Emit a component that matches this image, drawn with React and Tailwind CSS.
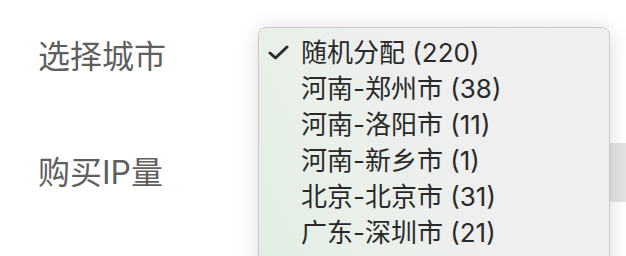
import React from "react";

const cities = [
  { name: "随机分配", count: 220, checked: true },
  { name: "河南-郑州市", count: 38 },
  { name: "河南-洛阳市", count: 11 },
  { name: "河南-新乡市", count: 1 },
  { name: "北京-北京市", count: 31 },
  { name: "广东-深圳市", count: 21 },
];

const CheckMark = () => (
  <svg width="22" height="16" viewBox="0 0 22 16" className="shrink-0">
    <polyline
      points="2,8 7.5,13 19,2"
      fill="none"
      stroke="#2b2b2b"
      strokeWidth="3"
      strokeLinecap="round"
      strokeLinejoin="round"
    />
  </svg>
);

const CityMenu = () => (
  <div className="absolute left-[258px] top-[27px] w-[352px] h-[260px] rounded-[8px] border border-[#c9c9c9] bg-[linear-gradient(65deg,#dfeee2_0%,#eaf0ea_30%,#efefef_60%,#f0f0f0_100%)] shadow-[0_2px_22px_rgba(0,0,0,0.14)] pt-[7px]">
    {cities.map((c) => (
      <div
        key={c.name}
        className="flex items-center h-[36px] text-[26px] text-[#2a2a2a] leading-none"
      >
        <div className="w-[42px] pl-[9px] flex items-center">
          {c.checked && <CheckMark />}
        </div>
        <span>
          {c.name} ({c.count})
        </span>
      </div>
    ))}
  </div>
);

export default function App() {
  return (
    <div className="relative w-[626px] h-[256px] overflow-hidden bg-white font-['Inter','Noto_Sans_CJK_SC',sans-serif]">
      <div className="flex flex-col gap-[57px] pt-[27px]">
        <div className="flex items-center h-[59px]">
          <label className="w-[258px] pl-[38px] text-[32px] text-[#5f5f5f] leading-none">
            选择城市
          </label>
          <div className="flex-1 h-full" />
        </div>
        <div className="flex items-center h-[59px]">
          <label className="w-[258px] pl-[38px] text-[32px] text-[#5f5f5f] leading-none">
            购买IP量
          </label>
          <div className="flex-1 h-full bg-[#e4e4e4] -mr-[40px]" />
        </div>
      </div>
      <CityMenu />
    </div>
  );
}
